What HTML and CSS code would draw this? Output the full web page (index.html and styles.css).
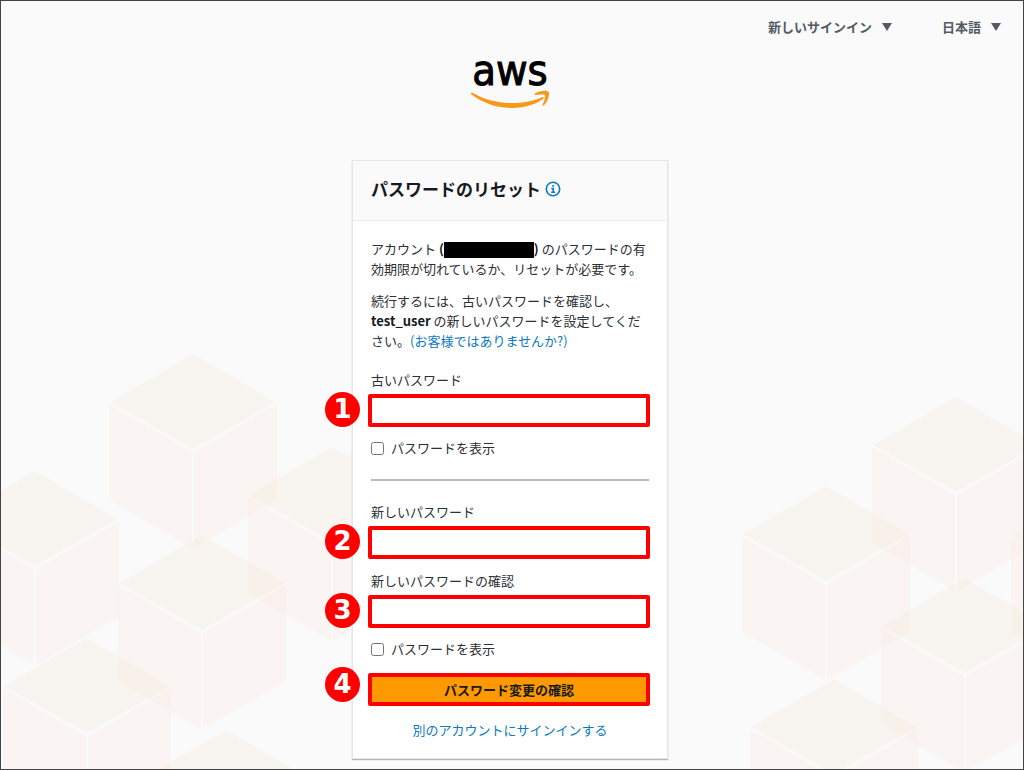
FILE: index.html
```html
<!DOCTYPE html>
<html lang="ja">
<head>
    <meta charset="UTF-8">
    <meta name="viewport" content="width=device-width, initial-scale=1.0">
    <title>パスワードのリセット</title>
    <link rel="stylesheet" href="styles.css">
</head>

<body>
    <div class="page">
        <!-- Background cubes -->
        <svg class="cubes cubes-left" width="420" height="415" viewBox="0 0 420 415" aria-hidden="true">
            <defs>
                <g id="cube">
                    <path class="cube-top" d="M0 0 83 48 0 95-83 48z" />
                    <path class="cube-side" d="M-84 50-1 98v96l-83-48z" />
                    <path class="cube-side" d="M84 50 1 98v96l83-48z" />
                </g>
            </defs>
            <use href="#cube" x="192" y="0" />
            <use href="#cube" x="34" y="117" />
            <use href="#cube" x="331" y="93" />
            <use href="#cube" x="201" y="181" />
            <use href="#cube" x="86" y="284" />
            <use href="#cube" x="225" y="376" />
        </svg>
        <svg class="cubes cubes-right" width="320" height="373" viewBox="0 0 320 373" aria-hidden="true">
            <use href="#cube" x="253" y="1" />
            <use href="#cube" x="123" y="90" />
            <use href="#cube" x="392" y="91" />
            <use href="#cube" x="262" y="182" />
            <use href="#cube" x="131" y="283" />
        </svg>

        <nav class="top-nav">
            <button type="button" class="nav-button">新しいサインイン <span class="caret"></span></button>
            <button type="button" class="nav-button">日本語 <span class="caret"></span></button>
        </nav>

        <main class="main-content">
            <svg class="logo" width="80" height="52" viewBox="0 0 80 52" role="img" aria-label="aws">
                <text class="logo-text" x="40" y="27" text-anchor="middle">aws</text>
                <path class="logo-smile" d="M1 36C12 45 27 50 42 50c11 0 23-3 31-9 1.500-1.500 0-2.500-1.500-1.500C62 43.500 52 45 43 45 28 45 15 42 3 35 1.500 34.300.5 35.200 1 36z" />
                <path class="logo-smile" d="M65 35.500C69 32.500 77 32 78.700 34 80 36 78 43.500 74 47.300c-1 .9-1.800.4-1.300-.8C74 43.500 75.700 38.500 74.800 37.200 73.800 36 69 36.700 66 37c-1.500.2-2-.8-1-1.500z" />
            </svg>

            <section class="card">
                <header class="card-header">
                    <h1>パスワードのリセット</h1>
                    <a href="#" class="info" aria-label="情報">
                        <svg width="16" height="16" viewBox="0 0 16 16">
                            <circle cx="8" cy="8" r="6.700" />
                            <path d="M8 4v1.800M6.300 7.500H8.200V11M6.200 11.200h4" />
                        </svg>
                    </a>
                </header>

                <form class="card-body">
                    <p>アカウント <b>(<span class="redacted"></span>)</b> のパスワードの有効期限が切れているか、リセットが必要です。</p>
                    <p>続行するには、古いパスワードを確認し、<b>test_user</b> の新しいパスワードを設定してください。<a href="#">(お客様ではありませんか?)</a></p>

                    <div class="group">
                        <label for="old-password">古いパスワード</label>
                        <div class="highlight">
                            <span class="step">1</span>
                            <input type="password" id="old-password" name="old-password">
                        </div>
                        <label class="check"><input type="checkbox" name="show-old">パスワードを表示</label>
                    </div>

                    <hr>

                    <div class="group">
                        <label for="new-password">新しいパスワード</label>
                        <div class="highlight">
                            <span class="step">2</span>
                            <input type="password" id="new-password" name="new-password">
                        </div>
                    </div>

                    <div class="group">
                        <label for="confirm-password">新しいパスワードの確認</label>
                        <div class="highlight">
                            <span class="step">3</span>
                            <input type="password" id="confirm-password" name="confirm-password">
                        </div>
                        <label class="check"><input type="checkbox" name="show-new">パスワードを表示</label>
                    </div>

                    <div class="highlight submit">
                        <span class="step">4</span>
                        <button type="submit">パスワード変更の確認</button>
                    </div>

                    <a href="#" class="other-account">別のアカウントにサインインする</a>
                </form>
            </section>
        </main>
    </div>
</body>
</html>
```
FILE: styles.css
```css
:root {
    --text-color: #2b2f36;
    --heading-color: #16191f;
    --link-color: #0f79bd;
    --nav-color: #545b64;
    --background-color: #fafafa;
    --highlight-color: #ff0000;
    --button-color: #ff9900;
}

* {
    margin: 0;
    padding: 0;
    box-sizing: border-box;
}

body {
    font-family: "Noto Sans CJK JP", sans-serif;
    font-size: 13px;
    line-height: 20px;
    color: var(--text-color);
    background-color: var(--background-color);
}

button,
input {
    font: inherit;
}

a {
    color: var(--link-color);
    text-decoration: none;
}

a:hover {
    text-decoration: underline;
}

.page {
    position: relative;
    z-index: 0;
    min-height: 100vh;
    padding-bottom: 10px;
    border: 1px solid #444;
    overflow: hidden;
}

.cubes {
    position: absolute;
    bottom: 0;
    z-index: -1;
}

.cubes-left {
    left: 0;
}

.cubes-right {
    right: 0;
}

.cube-top {
    fill: #f0d2a8;
    fill-opacity: 0.11;
}

.cube-side {
    fill: #fac8b4;
    fill-opacity: 0.09;
}

.top-nav {
    display: flex;
    justify-content: flex-end;
    gap: 50px;
    padding: 16px 22px 0;
}

.nav-button {
    display: flex;
    align-items: center;
    gap: 10px;
    border: none;
    background: none;
    color: var(--nav-color);
    font-weight: 700;
    cursor: pointer;
}

.caret {
    border: 5px solid transparent;
    border-top: 8px solid var(--nav-color);
    border-bottom: none;
}

.main-content {
    display: flex;
    flex-direction: column;
    align-items: center;
    padding: 21px 4px 0 0;
}

.logo {
    margin-bottom: 50px;
    overflow: visible;
}

.logo-text {
    font-family: "DejaVu Sans Condensed", "DejaVu Sans", sans-serif;
    font-stretch: condensed;
    font-size: 43px;
    stroke: #000;
    stroke-width: 1px;
}

.logo-smile {
    fill: #f8981d;
}

.card {
    width: 316px;
    background: white;
    border: 1px solid #e4e7e7;
    box-shadow: 0 1px 1px rgba(0, 28, 36, 0.3);
}

.card-header {
    display: flex;
    align-items: center;
    gap: 4px;
    padding: 14px 18px 18px;
    background: var(--background-color);
    border-bottom: 1px solid #eaeded;
}

.card-header h1 {
    font-size: 17px;
    line-height: 27px;
    color: var(--heading-color);
}

.info svg {
    display: block;
    fill: none;
    stroke: var(--link-color);
    stroke-width: 1.6;
}

.card-body {
    padding: 18px;
}

.card-body p {
    margin-bottom: 12px;
}

.card-body b {
    color: var(--heading-color);
}

.redacted {
    display: inline-block;
    width: 90px;
    height: 16px;
    background: black;
    vertical-align: -4px;
}

.group {
    margin-bottom: 12px;
}

.card-body p + .group {
    margin-top: 19px;
}

.group label {
    display: block;
    margin-bottom: 4px;
}

.group .check {
    display: flex;
    align-items: center;
    gap: 7px;
    margin: 11px 0 0;
}

.check input {
    width: 13px;
    height: 13px;
}

.highlight {
    position: relative;
    height: 33px;
    margin: 0 -1px 0 -3px;
    border: 4px solid var(--highlight-color);
    border-radius: 2px;
}

.highlight input,
.highlight button {
    display: block;
    width: 100%;
    height: 100%;
    border: none;
    outline: none;
}

.highlight input {
    padding: 0 8px;
}

.highlight button {
    background-color: var(--button-color);
    color: var(--heading-color);
    font-weight: 700;
    cursor: pointer;
}

/* Numbered callouts to the left of each field */
.step {
    position: absolute;
    top: -6px;
    left: -47px;
    width: 35px;
    height: 35px;
    border-radius: 50%;
    background: var(--highlight-color);
    color: white;
    font: 700 26px/35px "DejaVu Sans", sans-serif;
    text-align: center;
}

.submit {
    margin-top: 14px;
}

.submit .step {
    top: -10px;
}

hr {
    margin: 21px 0;
    border: none;
    border-top: 2px solid #bbb;
}

.other-account {
    display: block;
    margin-top: 14px;
    text-align: center;
}
```
